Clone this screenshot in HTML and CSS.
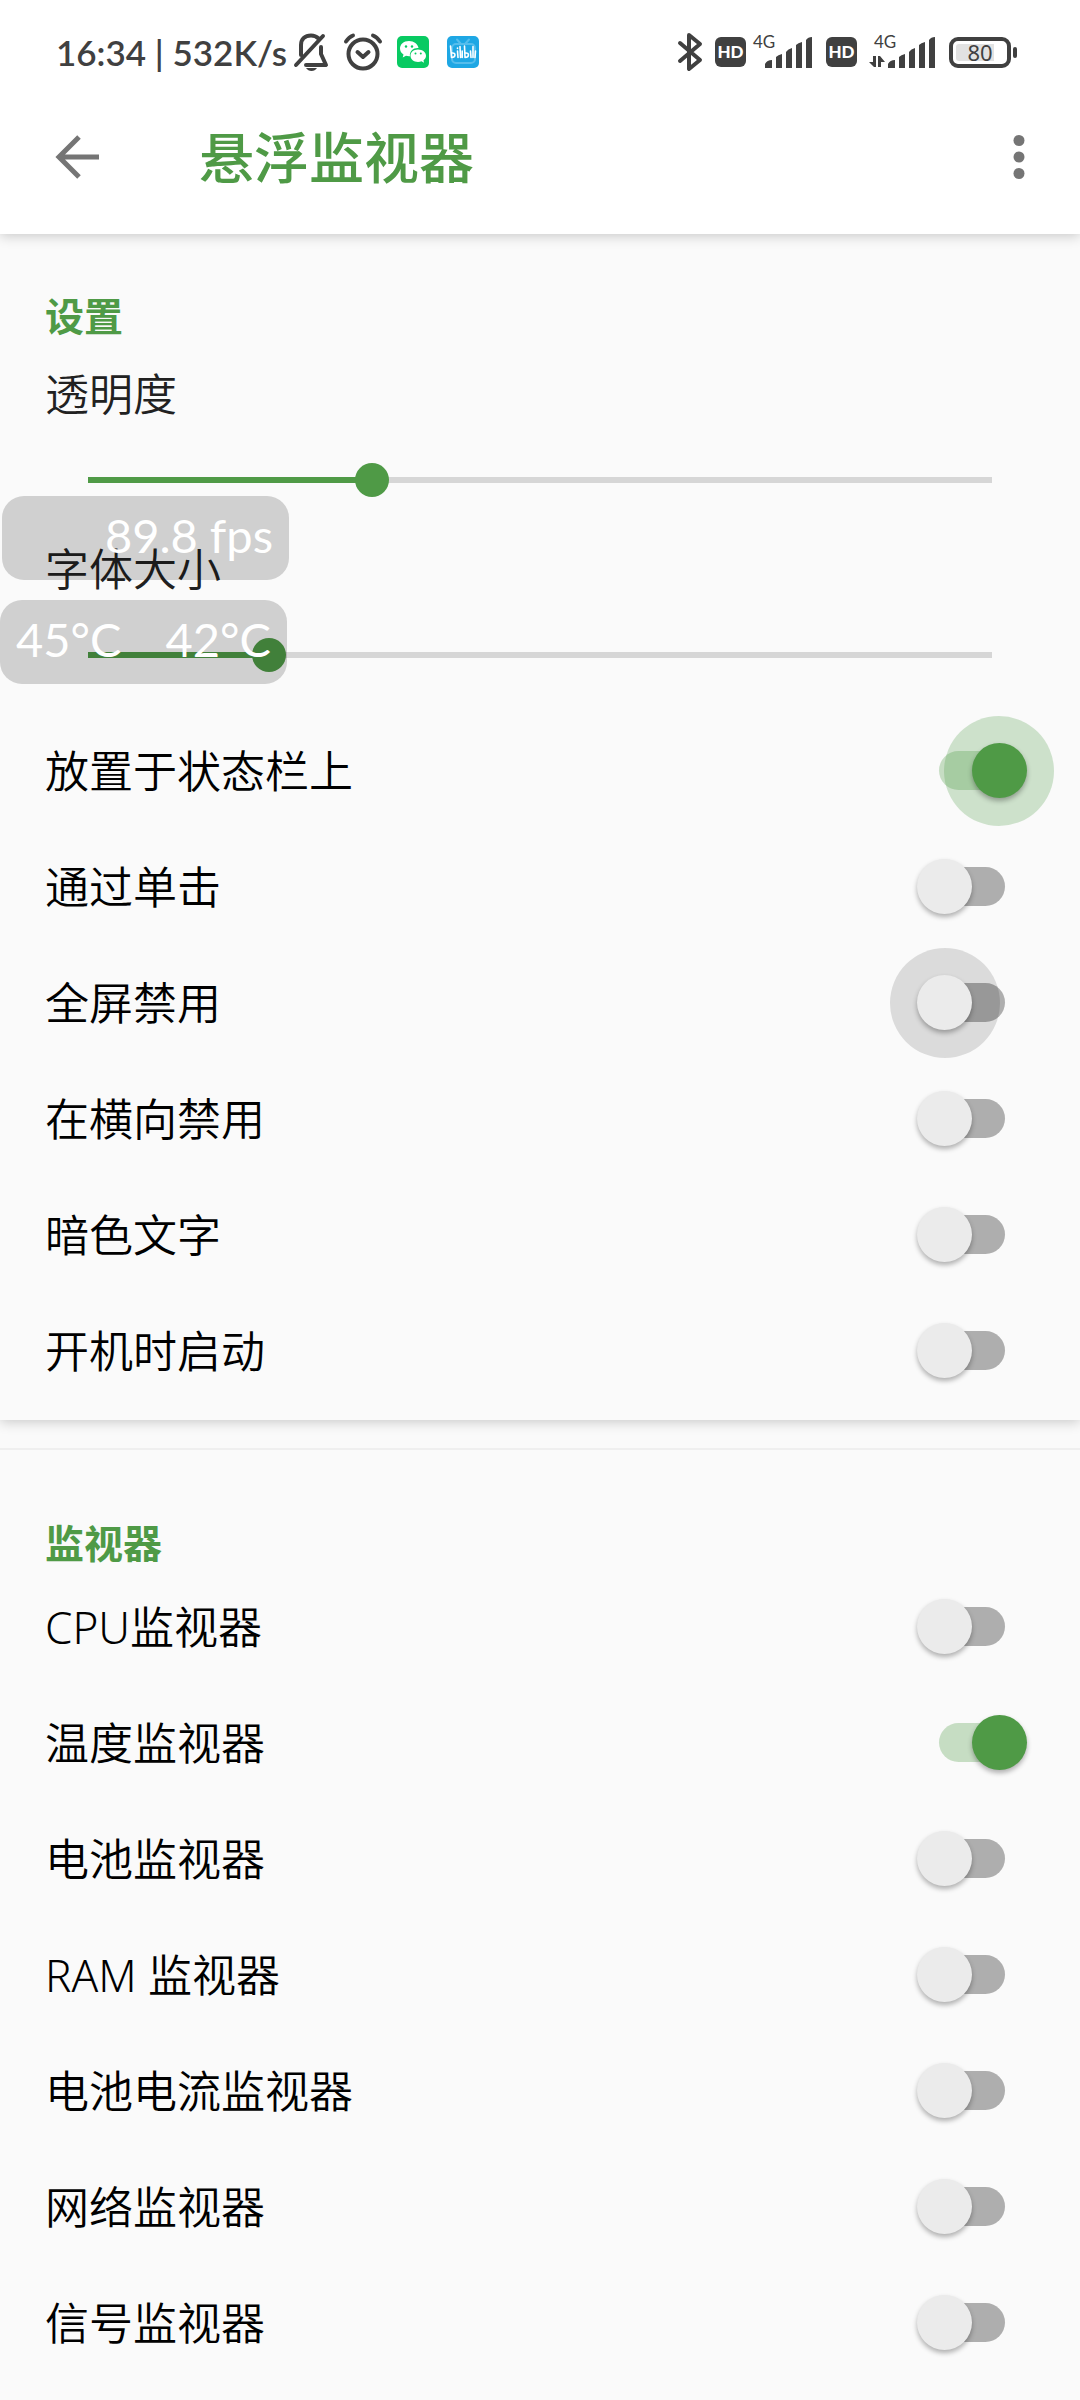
FILE: index.html
```html
<!DOCTYPE html>
<html lang="zh-CN">
<head>
<meta charset="utf-8">
<meta name="viewport" content="width=device-width, initial-scale=1">
<title>悬浮监视器</title>
<link rel="stylesheet" href="styles.css">
</head>
<body>
<header class="top">
  <div class="status">
    <span class="status-text">16:34 | 532K/s</span>
    <div class="status-left">
      <svg class="bell" width="36" height="40" viewBox="0 0 36 40" fill="none" stroke="#404040" stroke-width="4" stroke-linecap="round" stroke-linejoin="round">
        <path d="M8 23V13C8 7 12 3.500 18 3.500C21 3.500 23.500 4.500 25.500 6.500M30 4L3 33M28 15V22L33 33H13"/>
        <path d="M13 36H24Q22 39 18.500 39Q15 39 13 36Z" fill="#404040" stroke="none"/>
      </svg>
      <svg width="40" height="40" viewBox="0 0 40 40" fill="none" stroke="#404040" stroke-width="4" stroke-linecap="round" stroke-linejoin="round">
        <circle cx="20" cy="22" r="14.500"/><path d="M14.500 20L20 25L25.500 20M3 9.500Q6 5 10 3.500M37 9.500Q34 5 30 3.500"/>
      </svg>
      <svg class="app-icon" width="32" height="32" viewBox="0 0 32 32">
        <rect width="32" height="32" rx="5" fill="#08ca62"/>
        <path d="M12 5C6.500 5 3 8.500 3 12.500C3 15 4.300 17 6.500 18.500L5.700 21.500L9 19.800Q11 20.400 13 20.200C12 15 17 11.500 21.500 12C20.800 8 17 5 12 5Z" fill="#fff"/>
        <path d="M21 13.500C16.500 13.500 13.500 16.300 13.500 19.800C13.500 23.300 16.800 26 21 26Q23 26 24.500 25.300L27 26.700L26.500 24.200C28.200 23 29 21.500 29 19.800C29 16.300 25.500 13.500 21 13.500Z" fill="#fff"/>
        <circle cx="9" cy="10.500" r="1.200" fill="#08ca62"/><circle cx="15" cy="10.500" r="1.200" fill="#08ca62"/><circle cx="18.500" cy="17.500" r="1" fill="#08ca62"/><circle cx="23.800" cy="17.500" r="1" fill="#08ca62"/>
      </svg>
      <svg class="app-icon" width="32" height="32" viewBox="0 0 32 32" fill="none" stroke-linecap="round" stroke-linejoin="round">
        <rect width="32" height="32" rx="5" fill="#1ea7e4"/>
        <rect x="5" y="8" width="23" height="19" rx="4" stroke="#55bdec" stroke-width="2"/><path d="M10 3.500L14 8M22 3.500L18 8" stroke="#55bdec" stroke-width="2"/>
        <path d="M3.500 10L4.500 21.500C9 21.500 9 16.500 5 17M10.500 15L11 21.500M10.500 12V12.500M13 10.500L13.500 21.500M15.200 15V21.500M17.500 10L18 21.500C22.500 21.500 22.500 16.500 18.500 17M23.500 15L24 21.500M26 10.500V21.500M28.500 15L28 21.500" stroke="#fff" stroke-width="1.600"/>
      </svg>
    </div>
    <div class="status-right">
      <svg class="bluetooth" width="26" height="40" viewBox="0 0 26 40" fill="none" stroke="#404040" stroke-width="4" stroke-linecap="round" stroke-linejoin="round">
        <path d="M3 11L23 28L12 37V3L23 12L3 29"/>
      </svg>
      <span class="hd">HD</span>
      <svg class="signal" width="62" height="44" viewBox="0 -5 62 44" fill="#404040">
        <text x="1" y="13" class="net">4G</text>
        <path d="M13 33V29Q15 25 20 25V33ZM24 33V22Q26 20 30 19V33ZM34 33V17Q36 14 40 13V33ZM44 33V10Q46 8 50 7V33ZM54 33V5Q56 2 60 2V33Z"/>
      </svg>
      <span class="hd">HD</span>
      <svg class="signal-data" width="70" height="44" viewBox="0 -5 70 44" fill="#404040">
        <text x="5" y="13" class="net">4G</text>
        <path d="M4 21H7V32H5L0 27H4ZM9 32V21H11L16 27H12V32Z"/>
        <path d="M19 33V29Q21 25 26 25V33ZM30 33V22Q32 20 36 19V33ZM40 33V17Q42 14 46 13V33ZM50 33V10Q52 8 56 7V33ZM60 33V5Q62 2 66 2V33Z"/>
      </svg>
      <span class="battery"><span class="battery-level">80</span></span>
    </div>
  </div>
  <div class="appbar">
    <button class="icon-button" type="button" aria-label="返回">
      <svg width="44" height="44" viewBox="0 0 44 44" fill="none" stroke="#757575" stroke-width="5"><path d="M44 22H4M24 2L4 22L24 42"/></svg>
    </button>
    <h1>悬浮监视器</h1>
    <button class="icon-button" type="button" aria-label="更多选项">
      <svg width="12" height="44" viewBox="0 0 12 44" fill="#757575"><circle cx="6" cy="5.500" r="5.500"/><circle cx="6" cy="22" r="5.500"/><circle cx="6" cy="38.500" r="5.500"/></svg>
    </button>
  </div>
</header>

<main>
  <section class="card settings">
    <h2>设置</h2>
    <div class="slider"><label for="alpha">透明度</label><input id="alpha" type="range" min="0" max="1000" value="314" style="--fill: 0.314"></div>
    <div class="slider"><label for="size">字体大小</label><input id="size" type="range" min="0" max="1000" value="200" style="--fill: 0.2"></div>
    <label class="row">放置于状态栏上<input class="switch ripple" type="checkbox" checked></label>
    <label class="row">通过单击<input class="switch" type="checkbox"></label>
    <label class="row">全屏禁用<input class="switch ripple" type="checkbox"></label>
    <label class="row">在横向禁用<input class="switch" type="checkbox"></label>
    <label class="row">暗色文字<input class="switch" type="checkbox"></label>
    <label class="row">开机时启动<input class="switch" type="checkbox"></label>
  </section>
  <section class="card monitors">
    <h2>监视器</h2>
    <label class="row">CPU监视器<input class="switch" type="checkbox"></label>
    <label class="row">温度监视器<input class="switch" type="checkbox" checked></label>
    <label class="row">电池监视器<input class="switch" type="checkbox"></label>
    <label class="row">RAM 监视器<input class="switch" type="checkbox"></label>
    <label class="row">电池电流监视器<input class="switch" type="checkbox"></label>
    <label class="row">网络监视器<input class="switch" type="checkbox"></label>
    <label class="row">信号监视器<input class="switch" type="checkbox"></label>
  </section>
</main>

<div class="floating fps">89.8 fps</div>
<div class="floating temp"><span>45°C</span><span>42°C</span></div>
</body>
</html>
```
FILE: styles.css
```css
:root {
  --green: #4f9a46;
  --ink: #404040;
}

* {
  box-sizing: border-box;
}

body {
  margin: 0;
  background: #fafafa;
  color: #000;
  font-family: "Noto Sans", "Noto Sans CJK SC", sans-serif;
  font-size: 44px;
  font-weight: 350;
  line-height: 60px;
}

h1, h2 {
  margin: 0;
  color: var(--green);
}

svg {
  display: block;
  flex: none;
}

/* Status bar and app bar */
.top {
  position: relative;
  z-index: 1;
  background: #fff;
  box-shadow: 0 2px 12px rgba(0, 0, 0, 0.2);
}

.status {
  display: flex;
  align-items: center;
  height: 104px;
  padding: 0 63px 0 56px;
  color: var(--ink);
  font-family: Lato, sans-serif;
  font-weight: 400;
}

.status-text {
  font-size: 35px;
  font-weight: 600;
  white-space: nowrap;
}

.status-left, .status-right {
  display: flex;
  align-items: center;
}

.status-left {
  gap: 14px;
  margin-left: 6px;
}

.app-icon + .app-icon {
  margin-left: 4px;
}

.status-right {
  gap: 12px;
  margin-left: auto;
}

.hd {
  width: 31px;
  height: 30px;
  border-radius: 6px;
  background: var(--ink);
  color: #fff;
  font-size: 17px;
  font-weight: 900;
  line-height: 30px;
  text-align: center;
}

.signal {
  margin-left: -6px;
}

.signal-data {
  margin-right: -2px;
}

.net {
  font-size: 17px;
}

.battery {
  position: relative;
  width: 62px;
  height: 31px;
  margin-right: 6px;
  padding: 3px;
  border: 4px solid var(--ink);
  border-radius: 9px;
}

.battery::after {
  content: "";
  position: absolute;
  top: 6px;
  right: -10px;
  width: 4px;
  height: 11px;
  border-radius: 2px;
  background: var(--ink);
}

.battery-level {
  display: block;
  height: 17px;
  border-radius: 3px;
  background: linear-gradient(90deg, #e2e2e2 80%, transparent 80%);
  font-family: "Noto Sans", sans-serif;
  font-size: 22px;
  line-height: 17px;
  text-align: center;
}

.appbar {
  display: flex;
  align-items: center;
  height: 130px;
  padding: 0 55px 24px;
}

.icon-button {
  padding: 0;
  border: 0;
  background: none;
}

h1 {
  flex: 1;
  padding-left: 100px;
  font-size: 55px;
  font-weight: 500;
}

/* Cards */
.card {
  padding-left: 45px;
}

.settings {
  padding-top: 56px;
  padding-bottom: 11px;
  box-shadow: 0 2px 12px rgba(0, 0, 0, 0.2);
}

.monitors {
  margin-top: 28px;
  padding-top: 67px;
  padding-bottom: 20px;
  border-top: 2px solid #efefef;
}

h2 {
  font-size: 39px;
  font-weight: 700;
  line-height: 52px;
}

.slider {
  display: flex;
  flex-direction: column;
  height: 175px;
  padding-top: 22px;
  color: #212121;
}

.slider input {
  appearance: none;
  height: 34px;
  margin: 39px 71px 0 26px;
  background:
    linear-gradient(var(--green), var(--green)) 17px center / calc((100% - 34px) * var(--fill)) 6px no-repeat,
    linear-gradient(#d6d6d6, #d6d6d6) 17px center / calc(100% - 34px) 6px no-repeat;
}

.slider input::-webkit-slider-thumb {
  appearance: none;
  width: 34px;
  height: 34px;
  border-radius: 50%;
  background: var(--green);
}

.row {
  display: flex;
  align-items: center;
  justify-content: space-between;
  height: 116px;
  padding-right: 75px;
}

.settings .slider + .row {
  margin-top: 21px;
}

/* Switches */
.switch {
  appearance: none;
  position: relative;
  flex: none;
  width: 66px;
  height: 39px;
  margin: 0 0 2px;
  border-radius: 20px;
  background: rgba(0, 0, 0, 0.3);
}

.switch::before, .switch::after {
  content: "";
  position: absolute;
  border-radius: 50%;
}

.switch::after {
  top: -8px;
  left: -22px;
  width: 55px;
  height: 55px;
  background: #ebebeb;
  box-shadow: 0 3px 5px rgba(0, 0, 0, 0.3);
}

.switch:checked {
  background: rgba(79, 154, 70, 0.3);
}

.switch:checked::after {
  left: 33px;
  background: var(--green);
}

.ripple::before {
  top: -35px;
  left: -49px;
  width: 110px;
  height: 110px;
  background: rgba(0, 0, 0, 0.12);
}

.ripple:checked::before {
  left: 5px;
  background: rgba(79, 154, 70, 0.26);
}

/* Monitor windows that float over the page */
.floating {
  position: absolute;
  z-index: 2;
  height: 84px;
  padding: 0 16px;
  border-radius: 22px;
  background: rgba(0, 0, 0, 0.17);
  color: #fff;
  font-family: Lato, sans-serif;
  font-size: 47px;
  font-weight: 400;
  line-height: 78px;
  white-space: nowrap;
}

.fps {
  top: 496px;
  left: 2px;
  width: 287px;
  text-align: right;
}

.temp {
  top: 600px;
  left: 0;
  display: flex;
  justify-content: space-between;
  width: 287px;
}
```
